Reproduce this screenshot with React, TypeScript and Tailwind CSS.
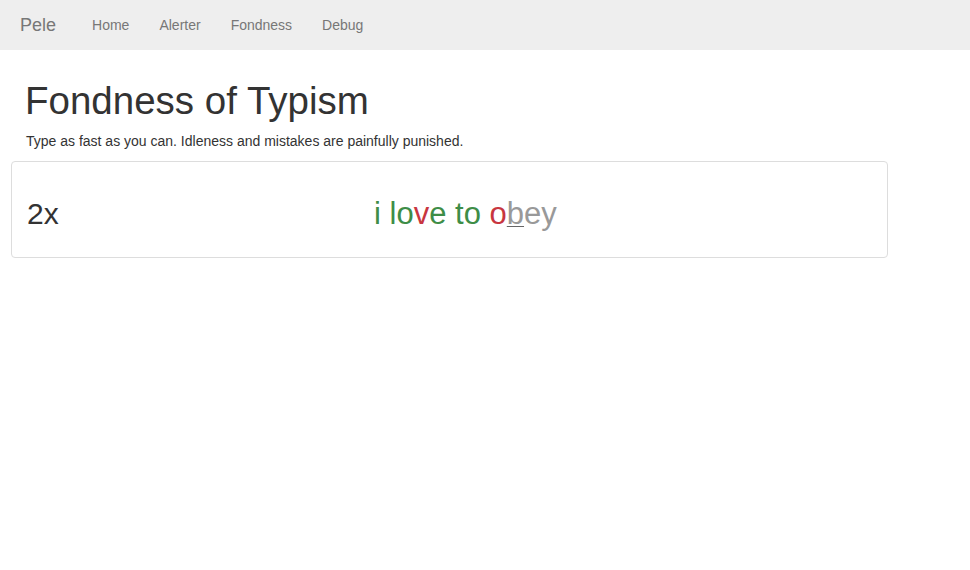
// Typing game page: navbar, heading and the single "typism" panel.
const links = ["Home", "Alerter", "Fondness", "Debug"];

type Glyph = { ch: string; state: "ok" | "bad" | "cursor" | "todo" };

const phrase: Glyph[] = [
  { ch: "i", state: "ok" },
  { ch: " ", state: "ok" },
  { ch: "l", state: "ok" },
  { ch: "o", state: "ok" },
  { ch: "v", state: "bad" },
  { ch: "e", state: "ok" },
  { ch: " ", state: "ok" },
  { ch: "t", state: "ok" },
  { ch: "o", state: "ok" },
  { ch: " ", state: "ok" },
  { ch: "o", state: "bad" },
  { ch: "b", state: "cursor" },
  { ch: "e", state: "todo" },
  { ch: "y", state: "todo" },
];

function Letter({ g }: { g: Glyph }) {
  if (g.state === "ok") return <span className="text-[#3e8d47]">{g.ch}</span>;
  if (g.state === "bad") return <span className="text-[#c8363f]">{g.ch}</span>;
  if (g.state === "cursor")
    return (
      <span className="text-[#999] underline decoration-[#666] decoration-[1px] underline-offset-[2px]">
        {g.ch}
      </span>
    );
  return <span className="text-[#999]">{g.ch}</span>;
}

export default function App() {
  return (
    <div
      className="min-h-[570px] bg-white text-[#333] text-[14px] leading-[20px]"
      style={{ fontFamily: '"Liberation Sans", Arial, sans-serif' }}
    >
      <nav className="h-[50px] bg-[#eeeeee] flex items-center">
        <a className="pl-[20px] pr-[21px] text-[18px] leading-[20px] text-[#777]">Pele</a>
        <ul className="flex">
          {links.map((l) => (
            <li key={l} className="px-[15px] text-[#777] leading-[20px]">
              {l}
            </li>
          ))}
        </ul>
      </nav>

      <div className="pl-[11px] w-[888px]">
        <h1 className="mt-[31px] mb-[10px] pl-[14px] text-[38.5px] leading-[40px] font-normal">
          Fondness of Typism
        </h1>
        <p className="mb-[10px] pl-[15px]">
          Type as fast as you can. Idleness and mistakes are painfully punished.
        </p>

        <div className="border border-[#dddddd] rounded-[4px] p-[15px]">
          <div className="flex items-baseline mt-[20px] mb-[12px] text-[30px] leading-[33px]">
            <h2 className="w-[347px] font-normal">2x</h2>
            <div className="whitespace-pre text-[31px]">
              {phrase.map((g, i) => (
                <Letter key={i} g={g} />
              ))}
            </div>
          </div>
        </div>
      </div>
    </div>
  );
}
